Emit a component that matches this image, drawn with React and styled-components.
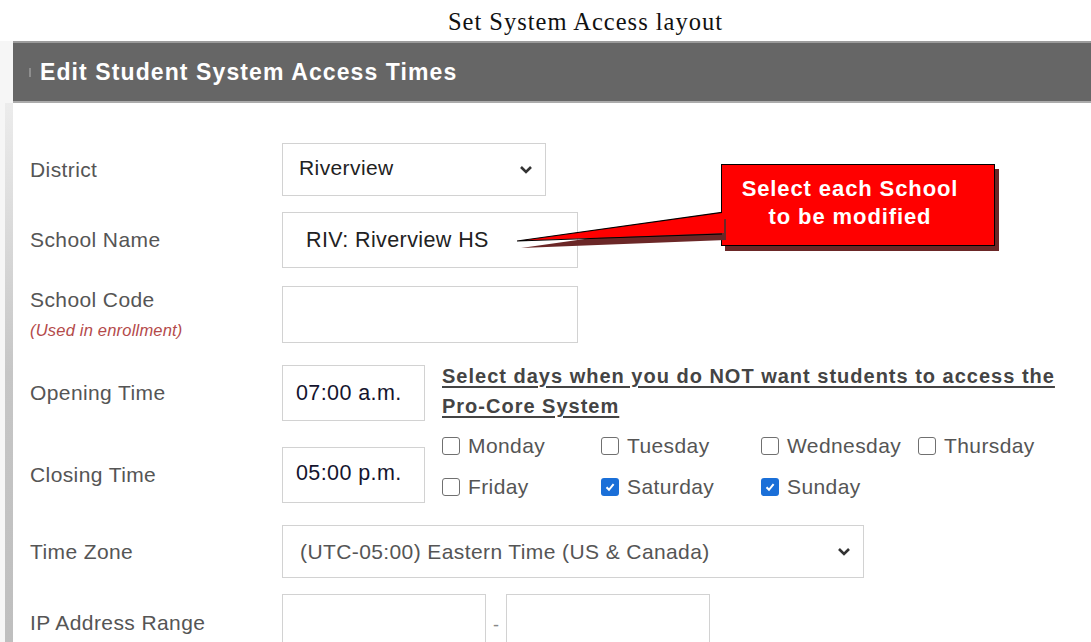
import React from 'react';
import styled, { createGlobalStyle } from 'styled-components';

const GlobalStyle = createGlobalStyle`
  html, body {
    margin: 0;
    padding: 0;
    background: #fff;
  }
  body {
    font-family: "Liberation Sans", Arial, sans-serif;
  }
`;

const Page = styled.div`
  width: 1091px;
  height: 642px;
  overflow: hidden;
  background: #fff;
`;

const Caption = styled.div`
  height: 41px;
  padding-left: 80px;
  text-align: center;
  font-family: "Liberation Serif", "Times New Roman", serif;
  font-size: 24.5px;
  letter-spacing: 1px;
  line-height: 44px;
  color: #111;
`;

const Panel = styled.section`
  padding-left: 13px;
  background: #f6f6f6;
`;

const PanelHeader = styled.header`
  display: flex;
  align-items: center;
  height: 58px;
  padding-left: 16px;
  gap: 9px;
  background: #666;
  border-top: 2px solid #9c9c9c;
  border-bottom: 2px solid #ababab;
`;

const Tick = styled.span`
  width: 2px;
  height: 9px;
  background: #8e8e8e;
`;

const HeaderTitle = styled.h1`
  margin: 0;
  font-size: 23px;
  font-weight: bold;
  letter-spacing: 1.1px;
  color: #fff;
`;

const PanelBody = styled.div`
  position: relative;
  margin-left: -8px;
  padding: 40px 0 0 17px;
  height: 560px;
  background: #fff;
  border-left: 8px solid #c8c8c8;
  border-image: linear-gradient(to bottom, #ececec, #c6c6c6 45%, #bdbdbd) 1;
`;

const Row = styled.div`
  display: flex;
  align-items: center;
  margin-top: ${(p) => p.$gap || 0}px;
`;

const Label = styled.div`
  width: 252px;
  flex-shrink: 0;
  font-size: 21px;
  letter-spacing: 0.4px;
  color: #555;
`;

const LabelText = styled.div`
  line-height: 28px;
`;

const Note = styled.div`
  margin-top: 3px;
  font-size: 16.5px;
  font-style: italic;
  letter-spacing: 0.2px;
  line-height: 26px;
  color: #b44a4a;
`;

const Box = styled.div`
  box-sizing: border-box;
  display: flex;
  align-items: center;
  width: ${(p) => p.$w}px;
  height: ${(p) => p.$h}px;
  padding-left: ${(p) => p.$pad || 14}px;
  padding-right: 12px;
  border: 1px solid #d2d2d2;
  background: #fff;
  font-size: ${(p) => p.$size || 21}px;
  letter-spacing: 0.4px;
  color: ${(p) => p.$color || '#222'};
`;

const BoxText = styled.span`
  flex: 1;
  margin-top: ${(p) => (p.$lift ? -3 : 0)}px;
  white-space: nowrap;
`;

const Dash = styled.span`
  width: 20px;
  text-align: center;
  font-size: 18px;
  color: #888;
  margin-top: 6px;
`;

const TimeGroup = styled.div`
  display: flex;
  align-items: flex-start;
  margin-top: 22px;
`;

const TimeRows = styled.div`
  display: flex;
  flex-direction: column;
`;

const Days = styled.div`
  margin: -4px 0 -4px 17px;
`;

const DaysHeading = styled.div`
  font-size: 20px;
  font-weight: bold;
  letter-spacing: 1px;
  line-height: 30px;
  color: #444;
  text-decoration: underline;
  text-underline-offset: 3px;
`;

const DayGrid = styled.div`
  display: grid;
  grid-template-columns: 159px 160px 157px auto;
  grid-auto-rows: 41px;
  margin-top: 4px;
`;

const Day = styled.label`
  display: flex;
  align-items: center;
  gap: 8px;
  font-size: 21px;
  letter-spacing: 0.4px;
  color: #555;
`;

const Check = styled.span`
  box-sizing: border-box;
  display: flex;
  align-items: center;
  justify-content: center;
  width: 18px;
  height: 18px;
  border-radius: 3px;
  border: ${(p) => (p.$on ? 'none' : '1.5px solid #707070')};
  background: ${(p) => (p.$on ? '#1a6fd8' : '#fff')};
`;

const Callout = styled.div`
  position: absolute;
  left: 708px;
  top: 61px;
  box-sizing: border-box;
  width: 274px;
  height: 82px;
  padding: 10px 16px 0 0;
  border: 1px solid #000;
  background: #ff0000;
  box-shadow: 4px 5px 0 #6b2727;
  text-align: center;
  font-size: 22px;
  font-weight: bold;
  letter-spacing: 0.9px;
  line-height: 28px;
  color: #fff;
`;

const Pointer = styled.svg`
  position: absolute;
  left: 497px;
  top: 102px;
  overflow: visible;
`;

const Chevron = () => (
  <svg width="14" height="10" viewBox="0 0 14 10">
    <polyline points="2,2 7,7 12,2" fill="none" stroke="#333" strokeWidth="2.6" />
  </svg>
);

const Tickmark = () => (
  <svg width="12" height="12" viewBox="0 0 12 12">
    <polyline points="2.5,6.2 5,8.8 9.6,3.2" fill="none" stroke="#fff" strokeWidth="2" />
  </svg>
);

const days = [
  { name: 'Monday', on: false },
  { name: 'Tuesday', on: false },
  { name: 'Wednesday', on: false },
  { name: 'Thursday', on: false },
  { name: 'Friday', on: false },
  { name: 'Saturday', on: true },
  { name: 'Sunday', on: true },
];

export default function App() {
  return (
    <Page>
      <GlobalStyle />
      <Caption>Set System Access layout</Caption>
      <Panel>
        <PanelHeader>
          <Tick />
          <HeaderTitle>Edit Student System Access Times</HeaderTitle>
        </PanelHeader>
        <PanelBody>
          <Row>
            <Label>District</Label>
            <Box $w={264} $h={53} $pad={16}>
              <BoxText $lift>Riverview</BoxText>
              <Chevron />
            </Box>
          </Row>
          <Row $gap={16}>
            <Label>School Name</Label>
            <Box $w={296} $h={56} $pad={23} $size={21.5}>
              <BoxText>RIV: Riverview HS</BoxText>
            </Box>
          </Row>
          <Row $gap={18}>
            <Label>
              <LabelText>School Code</LabelText>
              <Note>(Used in enrollment)</Note>
            </Label>
            <Box $w={296} $h={57} />
          </Row>

          <TimeGroup>
            <TimeRows>
              <Row>
                <Label>Opening Time</Label>
                <Box $w={143} $h={56} $pad={13} $size={21.5} $color="#14142e">
                  <BoxText>07:00 a.m.</BoxText>
                </Box>
              </Row>
              <Row $gap={26}>
                <Label>Closing Time</Label>
                <Box $w={143} $h={56} $pad={13} $size={21.5} $color="#14142e">
                  <BoxText $lift>05:00 p.m.</BoxText>
                </Box>
              </Row>
            </TimeRows>
            <Days>
              <DaysHeading>
                Select days when you do NOT want students to access the
                <br />
                Pro-Core System
              </DaysHeading>
              <DayGrid>
                {days.map((d) => (
                  <Day key={d.name}>
                    <Check $on={d.on}>{d.on && <Tickmark />}</Check>
                    {d.name}
                  </Day>
                ))}
              </DayGrid>
            </Days>
          </TimeGroup>

          <Row $gap={22}>
            <Label>Time Zone</Label>
            <Box $w={582} $h={53} $pad={17} $color="#555">
              <BoxText>(UTC-05:00) Eastern Time (US &amp; Canada)</BoxText>
              <Chevron />
            </Box>
          </Row>
          <Row $gap={16}>
            <Label>IP Address Range</Label>
            <Box $w={204} $h={57} />
            <Dash>-</Dash>
            <Box $w={204} $h={57} />
          </Row>

          <Callout>
            Select each School
            <br />
            to be modified
          </Callout>
          <Pointer width="220" height="46" viewBox="0 0 220 46">
            <polygon points="11,43 216,14 216,35" fill="#6b2727" />
            <polygon points="7,36 214,7 214,28" fill="#ff0000" />
            <polyline points="212,7.3 7,36 212,29" fill="none" stroke="#000" strokeWidth="1.2" />
          </Pointer>
        </PanelBody>
      </Panel>
    </Page>
  );
}
